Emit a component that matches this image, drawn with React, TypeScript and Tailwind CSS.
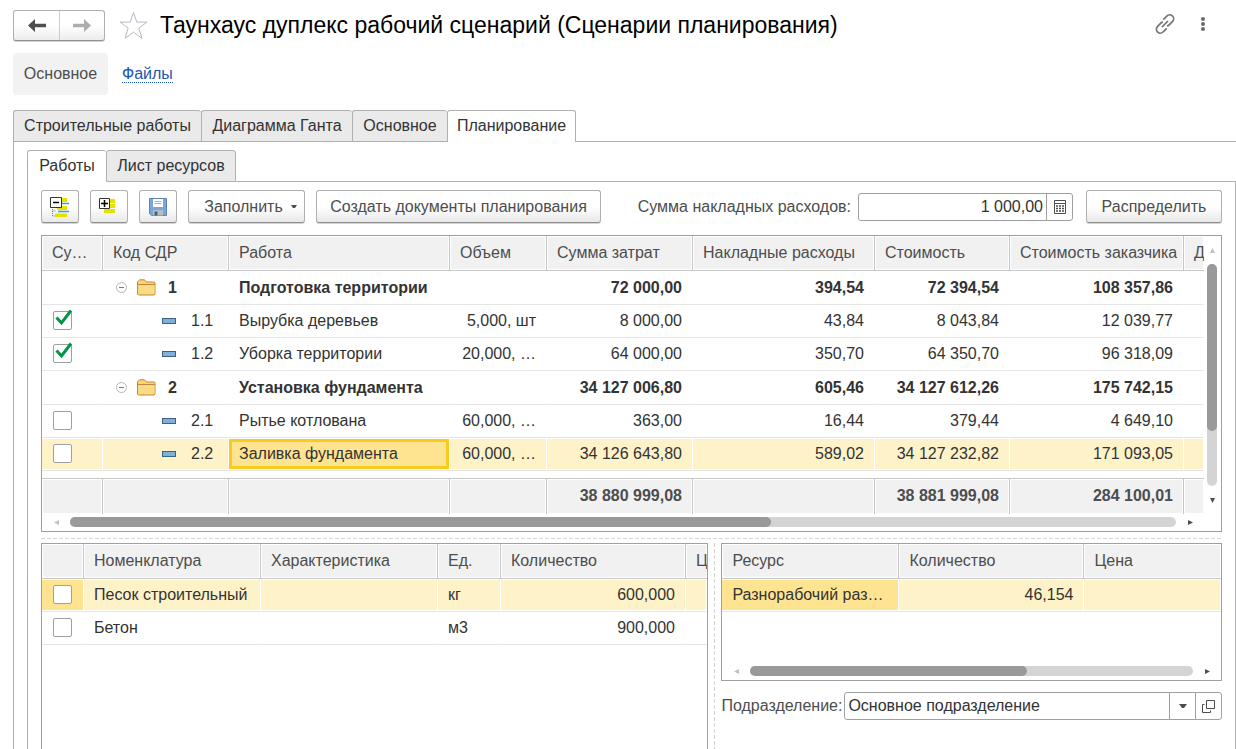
import { useState } from "react";
import type { ReactNode } from "react";
import clsx from "clsx";

type Work = {
  code: string;
  name: string;
  group?: boolean;
  checked?: boolean;
  volume: string;
  values: string[];
};

const works: Work[] = [
  { code: "1", name: "Подготовка территории", group: true, volume: "", values: ["72 000,00", "394,54", "72 394,54", "108 357,86"] },
  { code: "1.1", name: "Вырубка деревьев", checked: true, volume: "5,000, шт", values: ["8 000,00", "43,84", "8 043,84", "12 039,77"] },
  { code: "1.2", name: "Уборка территории", checked: true, volume: "20,000, …", values: ["64 000,00", "350,70", "64 350,70", "96 318,09"] },
  { code: "2", name: "Установка фундамента", group: true, volume: "", values: ["34 127 006,80", "605,46", "34 127 612,26", "175 742,15"] },
  { code: "2.1", name: "Рытье котлована", volume: "60,000, …", values: ["363,00", "16,44", "379,44", "4 649,10"] },
  { code: "2.2", name: "Заливка фундамента", volume: "60,000, …", values: ["34 126 643,80", "589,02", "34 127 232,82", "171 093,05"] },
];

const materials = [
  { name: "Песок строительный", unit: "кг", count: "600,000" },
  { name: "Бетон", unit: "м3", count: "900,000" },
];

const selectedCell =
  "border-r border-b border-r-white border-b-[#e5e5e5] bg-[#fef2c8] shadow-[inset_0_1px_#fff,inset_0_-1px_#fff]";
const plainCell = "border-r border-b border-r-transparent border-b-[#e5e5e5]";
const currentCell =
  "border-r border-b border-r-white border-b-[#e5e5e5] bg-[#fee391] shadow-[inset_0_1px_#fff,inset_0_-1px_#fff]";
const focusedCell =
  "border-r border-b border-r-white border-b-[#e5e5e5] bg-[#fee391] shadow-[inset_0_1px_#fff,inset_0_-1px_#fff,inset_3px_0_#facb1f,inset_-3px_0_#facb1f,inset_0_4px_#facb1f,inset_0_-4px_#facb1f]";

const buttonLook =
  "flex h-[33px] shrink-0 items-center justify-center rounded-[3px] border border-[#b0b0b0] border-b-[#8f8f8f] bg-linear-to-b from-white from-50% to-[#e9e9e9] text-[#4d4d4d] shadow-[0_1px_#d5d5d5]";

function HeadCell({ children, last }: { children?: ReactNode; last?: boolean }) {
  return (
    <th
      scope="col"
      className={clsx(
        "h-[35px] overflow-hidden border-b border-[#c6c6c6] bg-[#f1f1f1] px-[10px] text-left font-normal whitespace-nowrap text-[#4d4d4d] shadow-[inset_0_0_0_1px_#fff]",
        !last && "border-r",
      )}
    >
      {children}
    </th>
  );
}

function CheckBox({ label, initial = false }: { label: string; initial?: boolean }) {
  const [checked, setChecked] = useState(initial);
  return (
    <span className="relative block h-[19px] w-[19px]">
      <input
        type="checkbox"
        aria-label={label}
        checked={checked}
        onChange={() => setChecked(!checked)}
        className="block h-[19px] w-[19px] appearance-none rounded-[2px] border border-[#a0a0a0] bg-white"
      />
      {checked ? (
        <svg className="pointer-events-none absolute -top-0.5 left-0" width="20" height="18" viewBox="0 0 20 18" fill="none">
          <path d="M3.500 8.500 8.500 14 18 1.500" stroke="#009646" strokeWidth="3" />
        </svg>
      ) : null}
    </span>
  );
}

function Triangle({ direction, muted }: { direction: "left" | "right" | "up" | "down"; muted?: boolean }) {
  const paths = {
    left: "M6 1v5L1 3.5z",
    right: "M1 1v5l5-2.5z",
    up: "M1 6h5L3.5 1z",
    down: "M1 1h5L3.5 6z",
  };
  return (
    <svg width="7" height="7" viewBox="0 0 7 7">
      <path d={paths[direction]} fill={muted ? "#c0c0c0" : "#4d4d4d"} />
    </svg>
  );
}

function HorizontalScroll({ size }: { size: number }) {
  return (
    <div className="flex h-[17px] flex-1 items-center pb-px">
      <span className="flex w-7 justify-center">
        <Triangle direction="left" muted />
      </span>
      <div className="h-[10px] flex-1 rounded-full bg-[#d4d4d4]">
        <div className="h-[10px] rounded-full bg-[#999]" style={{ width: `${size}%` }} />
      </div>
      <span className="flex w-7 justify-center">
        <Triangle direction="right" />
      </span>
    </div>
  );
}

function VerticalScroll({ size }: { size: number }) {
  return (
    <div className="flex w-[17px] shrink-0 flex-col items-center pr-px">
      <span className="flex h-7 items-center">
        <Triangle direction="up" muted />
      </span>
      <div className="w-[10px] flex-1 rounded-full bg-[#d4d4d4]">
        <div className="w-[10px] rounded-full bg-[#999]" style={{ height: `${size}%` }} />
      </div>
      <span className="flex h-7 items-center">
        <Triangle direction="down" />
      </span>
    </div>
  );
}

function FolderIcon() {
  return (
    <svg width="19" height="17" viewBox="0 0 19 17">
      <path d="M.5 15V3L2.5.8h5L9.5 3h7.8l.7 1v11l-1 1H1.500z" fill="#ffd56b" stroke="#c08a45" />
      <path d="M1 5.500h17" stroke="#c08a45" />
      <path d="M1.500 6.500h16v8.500h-16z" fill="#f8dc85" />
    </svg>
  );
}

function CollapseIcon() {
  return (
    <svg width="11" height="11" viewBox="0 0 11 11" fill="none">
      <circle cx="5.500" cy="5.500" r="5" stroke="#b5b5b5" />
      <path d="M3 5.500h5" stroke="#777" />
    </svg>
  );
}

function Tab({ children, active, className }: { children: ReactNode; active?: boolean; className: string }) {
  return (
    <button
      type="button"
      role="tab"
      aria-selected={!!active}
      className={clsx(
        "h-8 shrink-0 rounded-t-[3px] border-t border-l border-[#b0b0b0] text-center whitespace-nowrap text-[#333]",
        active ? "bg-white pb-px" : "border-b bg-[#eaeaea]",
        className,
      )}
    >
      {children}
    </button>
  );
}

function Header() {
  return (
    <header className="flex h-[43px] items-center pt-2 pr-[30px] pl-[13px]">
      <div className="flex h-[31px] rounded-[3px] border border-[#b0b0b0] border-b-[#8f8f8f] bg-linear-to-b from-white from-50% to-[#ececec] shadow-[0_1px_#d5d5d5]">
        <button type="button" aria-label="Назад" className="grid w-[46px] place-items-center border-r border-[#ccc]">
          <svg width="18" height="13" viewBox="0 0 18 13">
            <path d="M0 6.500 7 0v4.700h11v3.600H7V13z" fill="#4f4f4f" />
          </svg>
        </button>
        <button type="button" aria-label="Вперед" className="grid w-[44px] place-items-center">
          <svg width="18" height="13" viewBox="0 0 18 13">
            <path d="M18 6.500 11 0v4.700H0v3.600h11V13z" fill="#adadad" />
          </svg>
        </button>
      </div>
      <button type="button" aria-label="Добавить в избранное" className="ml-[14px]">
        <svg width="29" height="29" viewBox="0 0 29 29" fill="none">
          <path
            d="M14.500 1.500 17.800 11.100H28L19.800 17.100 23 27.300 14.500 21.200 6 27.300 9.200 17.100 1 11.100H11.200z"
            stroke="#b4bac2"
          />
        </svg>
      </button>
      <h1 className="ml-3 flex-1 pb-px text-[23px] whitespace-nowrap text-black">
        Таунхаус дуплекс рабочий сценарий (Сценарии планирования)
      </h1>
      <div className="flex items-center gap-[25px] pb-1">
        <button type="button" aria-label="Получить ссылку">
          <svg width="20" height="20" viewBox="0 0 20 20" fill="none" stroke="#757575" strokeWidth="1.700">
            <path d="M8.300 5.700 11.800 2.200a3.700 3.700 0 0 1 5.800 5.200L14.200 10.900a3.500 3.500 0 0 1-2.200 1" />
            <path d="M11.700 14.300 8.200 17.800a3.700 3.700 0 0 1-5.800-5.200L5.800 9.100a3.500 3.500 0 0 1 2.200-1" />
            <path d="M7 13l6-6" />
          </svg>
        </button>
        <button type="button" aria-label="Ещё">
          <svg width="6" height="16" viewBox="0 0 6 16" fill="#6b6b6b">
            <circle cx="3" cy="3" r="2" />
            <circle cx="3" cy="8" r="2" />
            <circle cx="3" cy="13" r="2" />
          </svg>
        </button>
      </div>
    </header>
  );
}

function Toolbar() {
  return (
    <div className="flex items-center">
      <div className="flex gap-[11px]">
        <button type="button" aria-label="Свернуть все" className={clsx(buttonLook, "w-[38px]")}>
          <svg width="20" height="20" viewBox="0 0 20 20">
            <path d="M11 1h6v4h-6zM7 9h10v4H7zM5 16.500h12v3.500H5z" fill="#e6e200" />
            <path d="M12 6.500h7M8 14.500h11" stroke="#3f9fd0" strokeWidth="1.500" />
            <path d="M2.500 12v7H5M2.500 14H6" fill="none" stroke="#777" strokeDasharray="1 1" />
            <path d="M.5.500h11v10H.5z" fill="#fff" stroke="#333" />
            <path d="M3 5.500h6" stroke="#000" strokeWidth="1.500" />
          </svg>
        </button>
        <button type="button" aria-label="Развернуть все" className={clsx(buttonLook, "w-[38px]")}>
          <svg width="20" height="18" viewBox="0 0 20 18">
            <path d="M11 1h5v4h-5zM11 6h5v4h-5zM5 11h11v4H5z" fill="#e6e200" />
            <path d="M.5.500h10v10H.5z" fill="#fff" stroke="#333" />
            <path d="M2 5.500h7M5.500 2v7" stroke="#000" strokeWidth="1.500" />
          </svg>
        </button>
        <button type="button" aria-label="Записать" className={clsx(buttonLook, "w-[38px]")}>
          <svg width="18" height="18" viewBox="0 0 18 18">
            <path d="M.5.500h17v17H2.500l-2-2z" fill="#7ba6d8" stroke="#5a84b8" />
            <path d="M4 1h10v8H4z" fill="#fff" />
            <path d="M5.500 3.500h7M5.500 5.500h7" stroke="#9db2c9" />
            <path d="M4 12h10v5.500H4z" fill="#b9bcbc" />
            <path d="M5.500 13.500h3v4h-3z" fill="#3f638c" />
          </svg>
        </button>
        <button type="button" className={clsx(buttonLook, "w-[117px] gap-2 pl-2")}>
          Заполнить
          <svg width="6" height="4" viewBox="0 0 6 4">
            <path d="M0 0h6L4 3H2z" fill="#4d4d4d" />
          </svg>
        </button>
        <button type="button" className={clsx(buttonLook, "w-[285px]")}>
          Создать документы планирования
        </button>
      </div>
      <label htmlFor="overhead" className="ml-auto pr-[7px] whitespace-nowrap text-[#4d4d4d]">
        Сумма накладных расходов:
      </label>
      <div className="mr-[13px] flex h-7 w-[215px] rounded-[3px] border border-[#a0a0a0]">
        <input id="overhead" defaultValue="1 000,00" className="min-w-0 flex-1 pr-[3px] text-right text-[#333] outline-none" />
        <button type="button" aria-label="Калькулятор" className="grid w-[26px] place-items-center border-l border-[#a0a0a0]">
          <svg width="12" height="14" viewBox="0 0 12 14" fill="none" stroke="#4d4d4d">
            <path d="M.5.500h11v13H.5z" />
            <path d="M1 3.500h10" />
            <path d="M2 6h8M2 8.500h8M2 11h8" strokeWidth="1.500" strokeDasharray="2 1" />
          </svg>
        </button>
      </div>
      <button type="button" className={clsx(buttonLook, "w-[136px]")}>
        Распределить
      </button>
    </div>
  );
}

function WorksTable() {
  return (
    <section className="mt-3 border border-[#a0a0a0]">
      <div className="flex">
        <div className="min-w-0 flex-1 overflow-hidden">
          <table className="w-full table-fixed border-separate border-spacing-0 text-[#333]">
            <colgroup>
              <col className="w-[61px]" />
              <col className="w-[126px]" />
              <col className="w-[221px]" />
              <col className="w-[97px]" />
              <col className="w-[146px]" />
              <col className="w-[182px]" />
              <col className="w-[135px]" />
              <col className="w-[174px]" />
              <col />
            </colgroup>
            <thead>
              <tr>
                <HeadCell>Су…</HeadCell>
                <HeadCell>Код СДР</HeadCell>
                <HeadCell>Работа</HeadCell>
                <HeadCell>Объем</HeadCell>
                <HeadCell>Сумма затрат</HeadCell>
                <HeadCell>Накладные расходы</HeadCell>
                <HeadCell>Стоимость</HeadCell>
                <HeadCell>Стоимость заказчика</HeadCell>
                <HeadCell last>Д</HeadCell>
              </tr>
            </thead>
            <tbody>
              {works.map((work) => {
                const cell = work.code === "2.2" ? selectedCell : plainCell;
                return (
                  <tr key={work.code} className={work.group ? "h-[34px] font-bold" : "h-[33px]"}>
                    <td className={clsx(cell, "pb-0.5 pl-[11px]")}>
                      {work.group ? null : <CheckBox label={work.name} initial={work.checked} />}
                    </td>
                    <td className={cell}>
                      {work.group ? (
                        <div className="flex items-center pl-[13px]">
                          <button type="button" aria-label="Свернуть">
                            <CollapseIcon />
                          </button>
                          <span className="mr-3 ml-[10px]">
                            <FolderIcon />
                          </span>
                          {work.code}
                        </div>
                      ) : (
                        <div className="flex items-center gap-[15px] pl-[59px]">
                          <span className="h-[6px] w-[14px] border border-[#3b6285] bg-[#7fb0d8]" />
                          {work.code}
                        </div>
                      )}
                    </td>
                    <td className={clsx(work.code === "2.2" ? focusedCell : cell, "px-[10px] whitespace-nowrap")}>{work.name}</td>
                    <td className={clsx(cell, "pr-[10px] text-right whitespace-nowrap")}>{work.volume}</td>
                    {work.values.map((value, i) => (
                      <td key={i} className={clsx(cell, "pr-[10px] text-right whitespace-nowrap")}>
                        {value}
                      </td>
                    ))}
                    <td className={cell} />
                  </tr>
                );
              })}
              <tr aria-hidden="true" className="h-[7px]">
                <td colSpan={9} />
              </tr>
            </tbody>
            <tfoot>
              <tr className="h-9 font-bold text-[#4d4d4d]">
                {["", "", "", "", "38 880 999,08", "", "38 881 999,08", "284 100,01", ""].map((total, i) => (
                  <td
                    key={i}
                    className={clsx(
                      "border-t border-[#c6c6c6] bg-[#f1f1f1] pr-[10px] pb-0.5 text-right whitespace-nowrap shadow-[inset_0_0_0_1px_#fff]",
                      i < 8 && "border-r",
                    )}
                  >
                    {total}
                  </td>
                ))}
              </tr>
            </tfoot>
          </table>
        </div>
        <VerticalScroll size={75} />
      </div>
      <div className="flex pr-[17px]">
        <HorizontalScroll size={63.4} />
      </div>
    </section>
  );
}

function MaterialsTable() {
  return (
    <section className="overflow-hidden border border-b-0 border-[#a0a0a0]">
      <table className="w-full table-fixed border-separate border-spacing-0 text-[#333]">
        <colgroup>
          <col className="w-[42px]" />
          <col className="w-[177px]" />
          <col className="w-[177px]" />
          <col className="w-[63px]" />
          <col className="w-[185px]" />
          <col />
        </colgroup>
        <thead>
          <tr>
            <HeadCell />
            <HeadCell>Номенклатура</HeadCell>
            <HeadCell>Характеристика</HeadCell>
            <HeadCell>Ед.</HeadCell>
            <HeadCell>Количество</HeadCell>
            <HeadCell last>Ц</HeadCell>
          </tr>
        </thead>
        <tbody>
          {materials.map((item, i) => {
            const cell = i === 0 ? selectedCell : plainCell;
            return (
              <tr key={item.name} className="h-[33px]">
                <td className={clsx(i === 0 ? currentCell : plainCell, "pb-0.5 pl-[11px]")}>
                  <CheckBox label={item.name} />
                </td>
                <td className={clsx(cell, "pl-[10px] whitespace-nowrap")}>{item.name}</td>
                <td className={cell} />
                <td className={clsx(cell, "pl-[10px]")}>{item.unit}</td>
                <td className={clsx(cell, "pr-[10px] text-right")}>{item.count}</td>
                <td className={cell} />
              </tr>
            );
          })}
        </tbody>
      </table>
    </section>
  );
}

function Resources() {
  return (
    <div className="min-w-0">
      <section className="border border-[#a0a0a0]">
        <table className="w-full table-fixed border-separate border-spacing-0 text-[#333]">
          <colgroup>
            <col className="w-[177px]" />
            <col className="w-[185px]" />
            <col />
          </colgroup>
          <thead>
            <tr>
              <HeadCell>Ресурс</HeadCell>
              <HeadCell>Количество</HeadCell>
              <HeadCell last>Цена</HeadCell>
            </tr>
          </thead>
          <tbody>
            <tr className="h-[33px]">
              <td className={clsx(currentCell, "pl-[10px] whitespace-nowrap")}>Разнорабочий раз…</td>
              <td className={clsx(selectedCell, "pr-[10px] text-right")}>46,154</td>
              <td className={selectedCell} />
            </tr>
          </tbody>
        </table>
        <div className="mt-[51px] flex">
          <HorizontalScroll size={62.4} />
        </div>
      </section>
      <div className="mt-[11px] flex items-center">
        <label htmlFor="department" className="w-[123px] shrink-0 text-[#4d4d4d]">
          Подразделение:
        </label>
        <div className="flex h-7 flex-1 rounded-[3px] border border-[#a0a0a0]">
          <div className="relative min-w-0 flex-1">
            <select id="department" className="h-full w-full appearance-none bg-transparent pl-[3px] text-[#333] outline-none">
              <option>Основное подразделение</option>
            </select>
            <span className="pointer-events-none absolute inset-y-0 right-0 grid w-[26px] place-items-center border-l border-[#a0a0a0]">
              <svg width="8" height="4" viewBox="0 0 8 4">
                <path d="M0 0h8L5 4H3z" fill="#4d4d4d" />
              </svg>
            </span>
          </div>
          <button type="button" aria-label="Открыть" className="grid w-[26px] place-items-center border-l border-[#a0a0a0]">
            <svg width="13" height="13" viewBox="0 0 13 13" fill="none" stroke="#4d4d4d">
              <path d="M4.500.500h8v8h-8z" />
              <path d="M2.500 4.500h-2v8h8v-2" />
            </svg>
          </button>
        </div>
      </div>
    </div>
  );
}

export default function App() {
  return (
    <div className="flex min-h-screen flex-col overflow-hidden bg-white font-['Liberation_Sans',Arial,sans-serif] text-base leading-5">
      <Header />
      <nav className="mt-[10px] flex items-center pl-[13px]">
        <button type="button" className="h-[42px] w-[95px] rounded-[4px] bg-[#f2f2f2] text-[#4d4d4d]">
          Основное
        </button>
        <a href="#files" className="ml-[14px] border-b border-dotted border-[#1d55b0] leading-[17px] text-[#1d55b0]">
          Файлы
        </a>
      </nav>
      <div role="tablist" className="mt-[15px] flex pl-[13px]">
        <Tab className="w-[188px]">Строительные работы</Tab>
        <Tab className="w-[151px]">Диаграмма Ганта</Tab>
        <Tab className="w-[95px]">Основное</Tab>
        <Tab active className="w-[129px] border-r">
          Планирование
        </Tab>
        <div className="flex-1 border-b border-[#b0b0b0]" />
      </div>
      <main className="ml-[13px] flex flex-1 flex-col border-l border-[#b0b0b0] pt-2 pl-[13px]">
        <div role="tablist" className="flex">
          <Tab active className="w-[79px]">
            Работы
          </Tab>
          <Tab className="w-[130px] border-r">Лист ресурсов</Tab>
          <div className="flex-1 border-b border-[#b0b0b0]" />
        </div>
        <div className="flex flex-1 flex-col border-x border-[#b0b0b0] px-[13px] pt-2">
          <Toolbar />
          <WorksTable />
          <div className="mt-[6px] mb-1 h-px bg-[repeating-linear-gradient(90deg,#d4d4d4_0_4px,transparent_4px_6px)]" />
          <div className="grid flex-1 grid-cols-[minmax(0,4fr)_13px_minmax(0,3fr)]">
            <MaterialsTable />
            <div className="mx-auto w-px bg-[repeating-linear-gradient(180deg,#d4d4d4_0_4px,transparent_4px_6px)]" />
            <Resources />
          </div>
        </div>
      </main>
    </div>
  );
}
